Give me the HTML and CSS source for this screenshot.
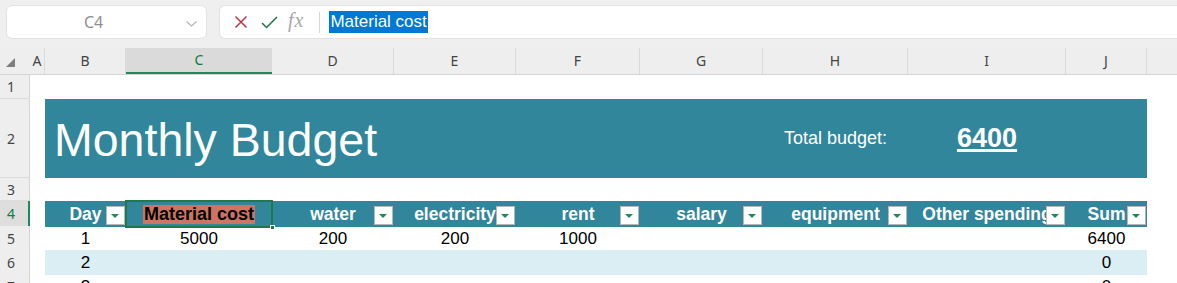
FILE: index.html
```html
<!DOCTYPE html>
<html>
<head>
    <meta charset="UTF-8">
    <title>Monthly Budget</title>
    <link rel="stylesheet" href="styles.css">
</head>
<body>
<div class="toolbar">
    <div class="namebox">
        <span class="ref">C4</span>
        <svg class="chevron" width="11" height="6" viewBox="0 0 11 6"><polyline points="0.5,0.5 5.5,5 10.5,0.5" fill="none" stroke="#b4b4b4" stroke-width="1.1"/></svg>
    </div>
    <div class="formula">
        <svg class="ico" width="14" height="14" viewBox="0 0 14 14"><path d="M1.5 1.5 L12.5 12.5 M12.5 1.5 L1.5 12.5" stroke="#c4314b" stroke-width="1.5" fill="none"/></svg>
        <svg class="ico" width="17" height="13" viewBox="0 0 17 13"><polyline points="1,7 5.5,11.5 16,1" stroke="#217346" stroke-width="1.5" fill="none"/></svg>
        <span class="fx">fx</span>
        <span class="sep"></span>
        <span class="edit">Material cost</span>
    </div>
</div>

<div class="sheet">
    <div class="row colheads">
        <div class="corner"><span class="tri"></span></div>
        <div class="ch">A</div>
        <div class="ch">B</div>
        <div class="ch active">C</div>
        <div class="ch">D</div>
        <div class="ch">E</div>
        <div class="ch">F</div>
        <div class="ch">G</div>
        <div class="ch">H</div>
        <div class="ch">I</div>
        <div class="ch">J</div>
        <div class="ch last"></div>
    </div>

    <div class="row r1">
        <div class="rh">1</div>
    </div>

    <div class="row r2">
        <div class="rh">2</div>
        <div></div>
        <div class="band title_band">
            <div class="title">Monthly Budget</div>
            <div></div><div></div><div></div><div></div><div></div>
            <div class="total_label">Total budget:</div>
            <div class="total">6400</div>
            <div></div>
        </div>
    </div>

    <div class="row r3">
        <div class="rh">3</div>
    </div>

    <div class="row r4">
        <div class="rh selected">4</div>
        <div></div>
        <div class="band head_band">
            <div class="th">Day<span class="filter"></span></div>
            <div class="th current"><span class="editing">Material cost</span></div>
            <div class="th">water<span class="filter"></span></div>
            <div class="th">electricity<span class="filter"></span></div>
            <div class="th">rent<span class="filter"></span></div>
            <div class="th">salary<span class="filter"></span></div>
            <div class="th">equipment<span class="filter"></span></div>
            <div class="th">Other spending<span class="filter"></span></div>
            <div class="th">Sum<span class="filter"></span></div>
        </div>
    </div>

    <div class="row r5">
        <div class="rh">5</div>
        <div></div>
        <div class="band">
            <div class="td">1</div>
            <div class="td">5000</div>
            <div class="td">200</div>
            <div class="td">200</div>
            <div class="td">1000</div>
            <div class="td"></div>
            <div class="td"></div>
            <div class="td"></div>
            <div class="td">6400</div>
        </div>
    </div>

    <div class="row r6">
        <div class="rh">6</div>
        <div></div>
        <div class="band stripe">
            <div class="td">2</div>
            <div class="td"></div><div class="td"></div><div class="td"></div><div class="td"></div>
            <div class="td"></div><div class="td"></div><div class="td"></div>
            <div class="td">0</div>
        </div>
    </div>

    <div class="row r7">
        <div class="rh">7</div>
        <div></div>
        <div class="band">
            <div class="td">3</div>
            <div class="td"></div><div class="td"></div><div class="td"></div><div class="td"></div>
            <div class="td"></div><div class="td"></div><div class="td"></div>
            <div class="td">0</div>
        </div>
    </div>
</div>
</body>
</html>
```

FILE: styles.css
```css
html, body {
    margin: 0;
    padding: 0;
}
body {
    width: 1177px;
    height: 283px;
    overflow: hidden;
    background: #ffffff;
    font-family: "Liberation Sans", Arial, sans-serif;
}

/* ---- formula bar ---- */
.toolbar {
    height: 48px;
    background: #efefef;
    display: flex;
    align-items: flex-start;
    padding: 5px 0 0 6px;
    box-sizing: border-box;
    gap: 12px;
}
.namebox {
    width: 201px;
    height: 34px;
    box-sizing: border-box;
    background: #fff;
    border: 1px solid #e2e2e2;
    border-radius: 6px;
    display: flex;
    align-items: center;
    position: relative;
}
.namebox .ref {
    font-family: "Noto Sans", sans-serif;
    font-size: 16px;
    color: #8f8f8f;
    margin-left: 77px;
}
.namebox .chevron {
    position: absolute;
    right: 9px;
    top: 15px;
}
.formula {
    flex: 1;
    height: 34px;
    box-sizing: border-box;
    background: #fff;
    border: 1px solid #e2e2e2;
    border-right: none;
    border-radius: 6px 0 0 6px;
    display: flex;
    align-items: center;
    padding-left: 14px;
}
.formula .ico {
    margin-right: 13px;
}
.formula .ico + .ico {
    margin-right: 10px;
}
.fx {
    font-family: "Liberation Serif", serif;
    font-style: italic;
    font-size: 20px;
    color: #a8a8a8;
    letter-spacing: 1px;
    margin-top: -3px;
}
.sep {
    width: 1px;
    height: 21px;
    background: #d6d6d6;
    margin: 0 9px 0 15px;
}
.edit {
    font-size: 17px;
    line-height: 22px;
    background: #0078d4;
    color: #ffffff;
    padding: 0 1px;
}

/* ---- grid ---- */
.row {
    display: grid;
    grid-template-columns: 30px 15px 1102px 30px;
}
.colheads {
    grid-template-columns: 30px 15px 81px 146px 122px 122px 124px 123px 145px 158px 81px 30px;
    height: 27px;
    background: #eeeeee;
    border-bottom: 1px solid #d4d4d4;
    box-sizing: border-box;
}
.corner {
    position: relative;
}
.corner .tri {
    position: absolute;
    left: 6px;
    top: 10px;
    width: 0;
    height: 0;
    border-left: 9px solid transparent;
    border-bottom: 9px solid #7e7e7e;
}
.ch {
    font-family: "Noto Sans", sans-serif;
    font-size: 14px;
    color: #444;
    text-align: center;
    line-height: 26px;
    border-right: 1px solid #dadada;
    margin: 0;
}
.ch.active {
    background: #dadada;
    color: #107c41;
    border-bottom: 2px solid #1d8a5a;
    line-height: 24px;
    border-right: none;
}
.ch.last {
    border-right: none;
}

.rh {
    font-family: "Noto Sans", sans-serif;
    font-size: 14px;
    color: #444;
    background: #eeeeee;
    border-right: 1px solid #d4d4d4;
    border-bottom: 1px solid #dcdcdc;
    box-sizing: border-box;
    padding-right: 7px;
    text-align: center;
    display: flex;
    align-items: center;
    justify-content: center;
}
.rh.selected {
    background: #dedede;
    color: #107c41;
    border-right: 2px solid #1d8a5a;
    padding-right: 6px;
}

.r1 { height: 24px; }
.r2 { height: 79px; }
.r3 { height: 23px; }
.r4 { height: 25px; }
.r5 { height: 24px; }
.r6 { height: 24px; }
.r7 { height: 24px; }

.band {
    display: grid;
    grid-template-columns: 81px 146px 122px 122px 124px 123px 145px 158px 81px;
    align-items: center;
}
.title_band {
    background: #31869b;
    color: #ffffff;
}
.title {
    font-size: 46.5px;
    white-space: nowrap;
    padding-left: 9px;
    margin-top: 2px;
}
.total_label {
    font-size: 18px;
    text-align: center;
}
.total {
    font-size: 27px;
    font-weight: bold;
    text-align: center;
    text-decoration: underline;
    text-decoration-thickness: 3px;
    text-underline-offset: 2px;
}

.head_band {
    background: #31869b;
    align-items: stretch;
}
.th {
    position: relative;
    color: #ffffff;
    font-weight: bold;
    font-size: 17.5px;
    text-align: center;
    line-height: 26px;
    white-space: nowrap;
    overflow: hidden;
}
.th .filter {
    position: absolute;
    right: 1px;
    top: 5px;
    width: 19px;
    height: 19px;
    box-sizing: border-box;
    background: #ffffff;
    border: 1px solid #b7b7b7;
}
.th .filter:after {
    content: '';
    position: absolute;
    left: 4px;
    top: 7px;
    border-left: 4px solid transparent;
    border-right: 4px solid transparent;
    border-top: 4px solid #1f8a5a;
}
.th.current {
    overflow: visible;
    z-index: 1;
    outline: 2px solid #1e7a4c;
    outline-offset: -1px;
}
.th.current:after {
    content: '';
    position: absolute;
    right: -3px;
    bottom: -3px;
    width: 5px;
    height: 5px;
    background: #1e7a4c;
    border: 1px solid #fff;
    box-sizing: border-box;
}
.editing {
    background: #cd7462;
    color: #000;
    font-size: 18px;
    padding: 0 1px;
    line-height: 19px;
    display: inline-block;
    margin-top: 3px;
}

.td {
    font-size: 17px;
    color: #000;
    text-align: center;
    line-height: 25px;
}
.stripe {
    background: #daeef3;
}
```
